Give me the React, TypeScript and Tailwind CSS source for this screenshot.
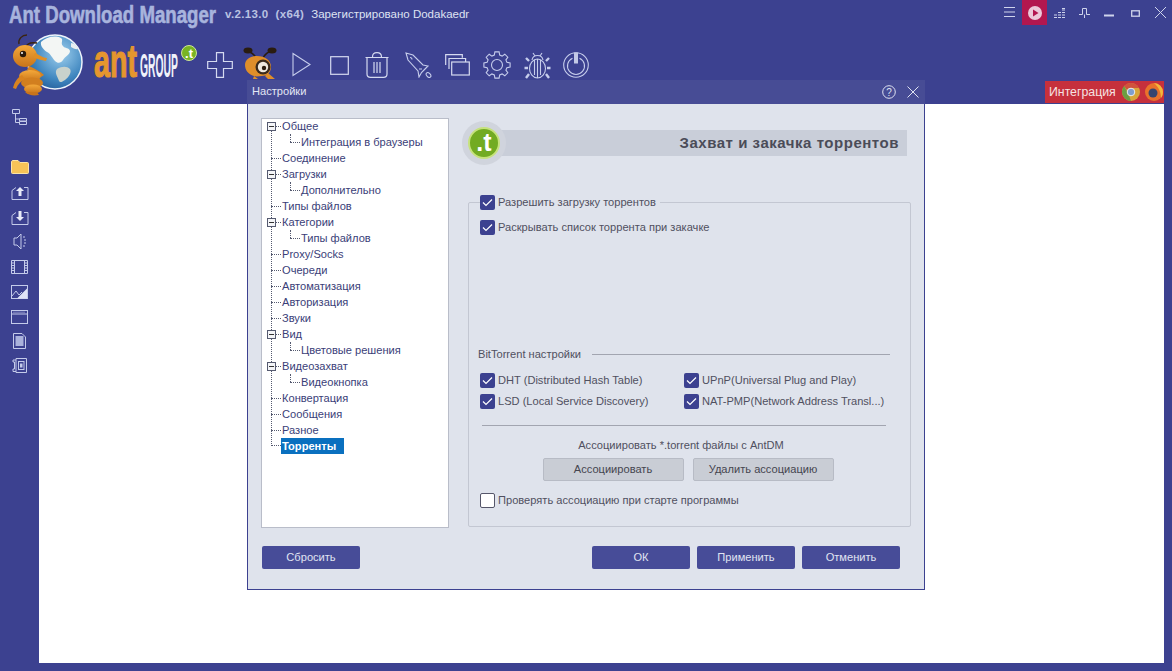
import React from "react";

const S = "#d5daf0";

function gearPath(cx: number, cy: number, ro: number, ri: number, n: number) {
  const pts: string[] = [];
  const step = (Math.PI * 2) / n;
  for (let i = 0; i < n; i++) {
    const a = i * step - Math.PI / 2;
    const d = step * 0.2;
    const seq: [number, number][] = [
      [ri, a - step * 0.34],
      [ro, a - d],
      [ro, a + d],
      [ri, a + step * 0.34],
    ];
    seq.forEach(([r, t]) => pts.push(`${(cx + r * Math.cos(t)).toFixed(1)} ${(cy + r * Math.sin(t)).toFixed(1)}`));
  }
  return "M" + pts.join("L") + "Z";
}

function Svg({ w, h, children, className = "" }: { w: number; h: number; children: React.ReactNode; className?: string }) {
  return (
    <svg width={w} height={h} viewBox={`0 0 ${w} ${h}`} fill="none" className={`block shrink-0 ${className}`}>
      {children}
    </svg>
  );
}

function LogoGlobe() {
  return (
    <svg width="84" height="68" viewBox="0 0 84 68" fill="none" className="block shrink-0">
      <defs>
        <radialGradient id="gl" cx="0.6" cy="0.35" r="0.8">
          <stop offset="0" stopColor="#9fd0ee" />
          <stop offset="0.6" stopColor="#3f86bf" />
          <stop offset="1" stopColor="#1c4f8c" />
        </radialGradient>
        <linearGradient id="an" x1="0" y1="0" x2="0" y2="1">
          <stop offset="0" stopColor="#f4a93a" />
          <stop offset="1" stopColor="#c9741a" />
        </linearGradient>
      </defs>
      <circle cx="54" cy="33" r="27" fill="url(#gl)" stroke="#eef4fb" strokeWidth="1.5" />
      <path d="M40 13c5-5 14-7 20-4 3 2-1 5 2 8 2 3 6 1 7 5 0 4-5 5-7 9-2 3-5 4-8 1-3-3-4-7-8-9-3-2-7-6-6-10z" fill="#f3f6f4" />
      <path d="M56 40c5-3 10-3 13 0 2 3-1 8-5 11-3 2-5 3-6 1-1-4-5-8-2-12z" fill="#c9d2cc" />
      <path d="M70 14c3 0 6 3 7 6-2 1-5-1-7-2z" fill="#e8eef0" />
      <path d="M18 15c-1-5 3-9 8-9M24 19c2-5 6-6 12-5" stroke="#3a2410" strokeWidth="1.4" />
      <ellipse cx="24" cy="27" rx="12" ry="11" fill="url(#an)" />
      <circle cx="22" cy="25" r="3.2" fill="#2a1a0c" />
      <circle cx="21" cy="24" r="1" fill="#fff" />
      <path d="M34 24c5 2 8 5 12 5l-1 3c-5-1-9-2-13-4z" fill="#e08f25" />
      <path d="M28 37c6 3 11 5 15 9l-3 2c-5-3-9-6-14-7z" fill="#d8831f" />
      <ellipse cx="29" cy="47" rx="11" ry="6" fill="url(#an)" />
      <ellipse cx="31" cy="54" rx="11" ry="5.5" fill="#d27f1f" />
      <ellipse cx="32" cy="60" rx="9" ry="4.5" fill="url(#an)" />
      <path d="M21 46c-5 3-8 8-9 13l3 1c2-5 5-8 9-10z" fill="#d8831f" />
      <path d="M24 63c3 3 8 4 14 3l-2-3z" fill="#c9741a" />
    </svg>
  );
}

function AntGroup() {
  return (
    <svg width="114" height="54" viewBox="0 0 114 54" className="block shrink-0">
      <text transform="translate(9 47) scale(0.61 1)" x="0" y="0" fontFamily="'Liberation Sans',sans-serif" fontWeight="700" fontSize="47" fill="#e5962e" stroke="#e5962e" strokeWidth="1.2">ant</text>
      <text transform="translate(55 47) scale(0.305 1)" x="0" y="0" fontFamily="'Liberation Sans',sans-serif" fontWeight="700" fontSize="34" fill="#f0f2fa">GROUP</text>
      <circle cx="104" cy="23" r="7.5" fill="#79b423" stroke="#cfe59a" strokeWidth="1" />
      <text x="104" y="28" textAnchor="middle" fontFamily="'Liberation Sans',sans-serif" fontWeight="700" fontSize="13" fill="#fff">.t</text>
    </svg>
  );
}

function AntSearch() {
  return (
    <Svg w={34} h={33} className="ml-[10px]">
      <path d="M13 11C11 7 8 5 4 4M20 11c2-4 4-6 9-7" stroke="#2a1c10" strokeWidth="1.6" />
      <ellipse cx="5" cy="3.500" rx="4.500" ry="3" fill="#2a1c10" />
      <ellipse cx="29" cy="3.500" rx="4.500" ry="3" fill="#2a1c10" />
      <path d="M2 18c0-6 6-9 12-9 8 0 14 4 14 11 0 6-5 9-9 9-3 0-5 1-8 0-6-2-9-6-9-11z" fill="#df8e2a" />
      <circle cx="20" cy="20" r="7.500" fill="#3a2a1c" />
      <circle cx="20" cy="20" r="5.200" fill="#efe9df" />
      <circle cx="21" cy="21" r="2.200" fill="#2a1c10" />
      <path d="M25 26l7 6h-7l-3-3zM11 29l4 3h-5z" fill="#df8e2a" />
    </Svg>
  );
}

function ToolIcons() {
  const st = { stroke: S, strokeWidth: 1.2 };
  const soft = { stroke: "#c6cdec", strokeWidth: 1.1 };
  return (
    <>
      <Svg w={26} h={26} className="ml-[8px] mt-[5px]">
        <path d="M9.500.700h7v8.800h8.800v7h-8.800v8.800h-7v-8.800H.700v-7h8.800z" {...st} />
      </Svg>
      <AntSearch />
      <Svg w={19} h={25} className="ml-[15px] mt-[5px]">
        <path d="M1 1.500l17 11L1 23.500z" {...soft} />
      </Svg>
      <Svg w={19} h={19} className="ml-[19px] mt-[9px]">
        <rect x="0.700" y="0.700" width="17.600" height="17.600" {...st} />
      </Svg>
      <Svg w={24} h={26} className="ml-[16px] mt-[5px]">
        <path d="M.500 5.500h23M7.500 5c0-3 1-4.300 4.500-4.300S16.500 2 16.500 5M2 6v16c0 2.500 1 3.300 3.500 3.300h13c2.500 0 3.500-.800 3.500-3.300V6M9 10v11M12 10v11M15 10v11" {...st} />
      </Svg>
      <Svg w={27} h={26} className="ml-[16px] mt-[5px]">
        <path d="M1 1l7 2 10 10 5 1-3.500 3.500-3 3L14 25l-1-6L3 8zM5 5.500c1 0 2 .500 2 2M17 17l-3 0" {...soft} />
        <ellipse cx="23.500" cy="23" rx="1.800" ry="2.800" transform="rotate(-45 23.500 23)" {...soft} />
      </Svg>
      <Svg w={25} h={22} className="ml-[13px] mt-[7px]">
        <path d="M.700 11V.700h16.600v3M4 15V4.500h16.600v3.500" {...st} />
        <rect x="6.700" y="8" width="17.600" height="13" {...st} />
      </Svg>
      <Svg w={28} h={28} className="ml-[13px] mt-[4px]">
        <path d={gearPath(14, 14, 13.300, 10.300, 8)} {...soft} />
        <circle cx="14" cy="14" r="5.500" {...soft} />
      </Svg>
      <Svg w={29} h={27} className="ml-[12px] mt-[5px]">
        <ellipse cx="14.500" cy="16.500" rx="8" ry="9.500" {...soft} />
        <path d="M14.500 7v19M11.500 8v15M17.500 8v15M9 8c.500-3 2-4.500 5.500-4.500S19.500 5 20 8M10 1l2 3M19 1l-2 3" {...soft} />
        <path d="M6 9L3 6M23 9l3-3M5 16H1.500M24 16h3.500M6 22l-3 4M23 22l3 4" stroke="#c6cdec" strokeWidth="2.400" />
      </Svg>
      <Svg w={26} h={26} className="ml-[11px] mt-[5px]">
        <circle cx="13" cy="13" r="12.300" {...soft} />
        <path d="M9.500 6.200a8.500 8.500 0 1 0 7 0" {...soft} />
        <rect x="11" y="0.500" width="4" height="11" fill="#c3c9e6" />
      </Svg>
    </>
  );
}

function WinControls() {
  const c = "#cfd4ec";
  return (
    <div className="flex items-start h-[26px] mr-[6px]">
      <Svg w={11} h={10} className="mt-[7px] mr-[7px]">
        <path d="M0 .500h11M0 5h11M0 9.500h11" stroke={c} />
      </Svg>
      <div className="w-[25px] h-[25px] bg-[#b2174f] flex items-center justify-center">
        <Svg w={14} h={14}>
          <circle cx="7" cy="7" r="7" fill="#ecc9d9" />
          <path d="M5 3.500l5.500 3.500L5 10.500z" fill="#b2174f" />
        </Svg>
      </div>
      <Svg w={11} h={10} className="mt-[8px] ml-[7px]">
        <path d="M0 9.500h3M4 9.500h3M8 9.500h3M0 7h3M4 7h3M8 7h3M4 4.500h3M8 4.500h3M8 2h3M8 .500h3" stroke={c} />
      </Svg>
      <Svg w={11} h={10} className="mt-[8px] ml-[14px]">
        <path d="M3.500.500h4v6h3.500M0 6.500h3.500V.500M5.500 6.500V10" stroke={c} />
      </Svg>
      <Svg w={10} h={3} className="mt-[14px] ml-[14px]">
        <path d="M0 1.500h10" stroke={c} strokeWidth="2" />
      </Svg>
      <Svg w={9} h={7} className="mt-[10px] ml-[17px]">
        <rect x="0.700" y="0.800" width="7.600" height="5.400" stroke={c} strokeWidth="1.300" />
      </Svg>
      <Svg w={11} h={11} className="mt-[7px] ml-[15px]">
        <path d="M0 0l11 11M11 0L0 11" stroke={c} />
      </Svg>
    </div>
  );
}

function SideIcons() {
  const st = { stroke: "#c4cbea", strokeWidth: 1 };
  const items = [
    <Svg w={15} h={16} key="t"><path d="M.500.500h7v4h-7zM7.500 9.500h7v2.500h-7zM7.500 12.500h7v3h-7zM3.500 4.500v9h4M3.500 10h4" {...st} /></Svg>,
    <Svg w={18} h={14} key="f"><path d="M.500 2c0-1 .500-1.500 1.500-1.500h5L9 2.500h7.500c.700 0 1 .500 1 1v9c0 .700-.300 1-1 1H1.500c-.700 0-1-.300-1-1z" fill="#f7c357" stroke="#fbe3a6" /></Svg>,
    <Svg w={18} h={14} key="u"><path d="M5 1.500L1 4.500V13.500h16V1.500h-4" {...st} /><path d="M9 1l4 4h-2.500v5h-3V5H5z" fill="#e8ebf8" /></Svg>,
    <Svg w={18} h={15} key="d"><path d="M5 2.500L1 5.500V14.500h16V2.500h-4" {...st} /><path d="M7.500 1h3v6H13l-4 4-4-4h2.500z" fill="#e8ebf8" /></Svg>,
    <Svg w={14} h={17} key="a"><path d="M1 5h3l4-4v15L4 12H1z" {...st} /><path d="M10 4h2M11 7h2M11 10h2M10 13h2" {...st} /></Svg>,
    <Svg w={17} h={14} key="v"><path d="M.500.500h16v13H.500zM3.500.500v13M13.500.500v13M.500 3h3M.500 5.500h3M.500 8h3M.500 10.500h3M13.500 3h3M13.500 5.500h3M13.500 8h3M13.500 10.500h3" {...st} /></Svg>,
    <Svg w={17} h={14} key="i"><rect x=".500" y=".500" width="16" height="13" {...st} /><path d="M16 3.500V13.500H6z" fill="#dfe3f6" /><path d="M1 11l4-5 3 4 3-3" {...st} /></Svg>,
    <Svg w={17} h={14} key="w"><rect x=".500" y=".500" width="16" height="13" {...st} /><path d="M1 4h15" {...st} /><path d="M2.500 2.200h12" stroke="#c4cbea" strokeDasharray="1 1" /></Svg>,
    <Svg w={13} h={16} key="p"><path d="M.500.500H9L12.500 4v11.500H.500z" {...st} /><rect x="2.500" y="3" width="8" height="10" fill="#aab2dc" /></Svg>,
    <Svg w={15} h={15} key="x"><path d="M4 .500h10.500v14H4zM4 2H1v2h1.500v7H1v2.500h3" {...st} /><rect x="6.500" y="3.500" width="5.500" height="8" {...st} /><rect x="8" y="5.500" width="2.500" height="4" fill="#c4cbea" /></Svg>,
  ];
  const gaps = ["mb-[35px]", "mb-[12px]", "mb-[10px]", "mb-[8px]", "mb-[10px]", "mb-[11px]", "mb-[11px]", "mb-[9px]", "mb-[9px]", ""];
  return (
    <div className="w-[39px] shrink-0 flex flex-col items-center pt-[5px]">
      {items.map((it, i) => (
        <div key={i} className={gaps[i]}>{it}</div>
      ))}
    </div>
  );
}

const tree: [string, number, boolean?][] = [
  ["Общее", 0, true],
  ["Интеграция в браузеры", 1],
  ["Соединение", 0],
  ["Загрузки", 0, true],
  ["Дополнительно", 1],
  ["Типы файлов", 0],
  ["Категории", 0, true],
  ["Типы файлов", 1],
  ["Proxy/Socks", 0],
  ["Очереди", 0],
  ["Автоматизация", 0],
  ["Авторизация", 0],
  ["Звуки", 0],
  ["Вид", 0, true],
  ["Цветовые решения", 1],
  ["Видеозахват", 0, true],
  ["Видеокнопка", 1],
  ["Конвертация", 0],
  ["Сообщения", 0],
  ["Разное", 0],
];

function Tree() {
  return (
    <div className="relative w-[188px] h-[410px] mt-[14px] bg-white border border-[#b9bdc9] shrink-0">
      <div className="absolute left-[9px] top-[12px] h-[315px] border-l border-dotted border-[#555a70]" />
      {tree.map(([t, d, exp], i) => (
        <div key={i} className="relative h-4 flex items-center pb-[2px]">
          {d === 0 ? (
            <div className="absolute left-[9px] top-[7px] w-[10px] border-t border-dotted border-[#555a70]" />
          ) : (
            <>
              <div className="absolute left-[28px] top-[-1px] h-[8px] border-l border-dotted border-[#555a70]" />
              <div className="absolute left-[28px] top-[7px] w-[10px] border-t border-dotted border-[#555a70]" />
            </>
          )}
          {exp && (
            <div className="absolute left-[5px] top-[3px] w-[9px] h-[9px] bg-[#f4f5f8] border border-[#555a70] flex items-center justify-center">
              <div className="w-[5px] h-px bg-[#333]" />
            </div>
          )}
          <span className={`${d === 0 ? "ml-[20px]" : "ml-[39px]"} text-[#3a3e78] whitespace-nowrap`}>{t}</span>
        </div>
      ))}
      <div className="relative h-4 -mt-px flex items-center">
        <div className="absolute left-[9px] top-[7px] w-[10px] border-t border-dotted border-[#555a70]" />
        <span className="ml-[19px] px-px w-[63px] h-4 leading-4 bg-[#0a70bf] text-white font-bold whitespace-nowrap">Торренты</span>
      </div>
    </div>
  );
}

function Check({ on = true, label, className = "" }: { on?: boolean; label: string; className?: string }) {
  return (
    <div className={`flex items-center h-[15px] gap-[3px] ${className}`}>
      {on ? (
        <div className="w-[15px] h-[15px] rounded-[2px] bg-[#3c4190] flex items-center justify-center shrink-0">
          <Svg w={11} h={9}>
            <path d="M1 4.500L4 7.500 10 1.500" stroke="#fff" strokeWidth="1.200" />
          </Svg>
        </div>
      ) : (
        <div className="w-[15px] h-[15px] rounded-[2px] bg-white border border-[#55566a] shrink-0" />
      )}
      <span className="text-[#50505f] whitespace-nowrap">{label}</span>
    </div>
  );
}

function BlueBtn({ children, className = "" }: { children: React.ReactNode; className?: string }) {
  return (
    <div className={`w-[98px] h-[23px] rounded-[2px] bg-[#474c98] text-[#e0e4f2] flex items-center justify-center ${className}`}>
      {children}
    </div>
  );
}

function GrayBtn({ children }: { children: React.ReactNode }) {
  return (
    <div className="w-[141px] h-[23px] rounded-[2px] bg-[#c9cdd5] border border-[#b7bbc5] text-[#45454f] flex items-center justify-center">
      {children}
    </div>
  );
}

function Right() {
  return (
    <div className="w-[443px] ml-[19px] shrink-0 flex flex-col">
      <div className="relative ml-[22px] mt-[26px] h-[26px] w-[417px] bg-[#c9ced9] flex items-center justify-end pr-[8px]">
        <span className="font-bold text-[15px] tracking-[0.53px] text-[#4b4c58] whitespace-nowrap">Захват и закачка торрентов</span>
        <div className="absolute left-[-28px] top-[-9px] w-[44px] h-[44px] rounded-full bg-[#d0d4dd] flex items-center justify-center">
          <div className="w-[32px] h-[32px] rounded-full bg-[#72ab22] border-2 border-[#c6e27c] flex items-center justify-center text-white font-bold text-[25px] leading-none pb-[2px]">.t</div>
        </div>
      </div>
      <div className="relative mt-[46px] h-[325px] border border-[#c3c7d2] rounded-[2px] flex flex-col">
        <Check label="Разрешить загрузку торрентов" className="absolute left-[11px] top-[-8px] bg-[#dfe3ec] pr-[4px]" />
        <Check label="Раскрывать список торрента при закачке" className="ml-[11px] mt-[17px]" />
        <div className="flex items-center ml-[9px] mr-[20px] mt-[112px] h-[14px] gap-[11px]">
          <span className="text-[#50505f] whitespace-nowrap">BitTorrent настройки</span>
          <div className="flex-1 h-px bg-[#a2a5b0]" />
        </div>
        <div className="grid grid-cols-[204px_1fr] gap-y-[6px] ml-[11px] mt-[12px]">
          <Check label="DHT (Distributed Hash Table)" />
          <Check label="UPnP(Universal Plug and Play)" />
          <Check label="LSD (Local Service Discovery)" />
          <Check label="NAT-PMP(Network Address Transl...)" />
        </div>
        <div className="h-px bg-[#a2a5b0] ml-[13px] mr-[24px] mt-[16px]" />
        <div className="text-center text-[#50505f] mt-[12px] h-[14px] leading-[14px] pr-[17px]">Ассоциировать *.torrent файлы с AntDM</div>
        <div className="flex justify-center gap-[9px] mt-[6px] pr-[3px]">
          <GrayBtn>Ассоциировать</GrayBtn>
          <GrayBtn>Удалить ассоциацию</GrayBtn>
        </div>
        <Check on={false} label="Проверять ассоциацию при старте программы" className="ml-[11px] mt-[12px]" />
      </div>
    </div>
  );
}

function Dialog() {
  return (
    <div className="absolute left-[247px] top-[80px] w-[678px] h-[510px] bg-[#dfe3ec] border-x border-b border-[#3c4190] flex flex-col">
      <div className="h-[24px] -mx-px bg-[#474c95] flex items-center justify-between pl-[5px] pr-[6px] text-[#e4e7f4]">
        <span className="pb-[2px]">Настройки</span>
        <div className="flex items-center gap-[11px]">
          <Svg w={14} h={14}>
            <circle cx="7" cy="7" r="6.300" stroke="#dfe3f2" />
            <text x="7" y="10.500" textAnchor="middle" fontSize="10" fontFamily="'Liberation Sans',sans-serif" fill="#dfe3f2">?</text>
          </Svg>
          <Svg w={12} h={12}>
            <path d="M.500.500l11 11M11.500.500l-11 11" stroke="#dfe3f2" />
          </Svg>
        </div>
      </div>
      <div className="flex pl-[13px]">
        <Tree />
        <Right />
      </div>
      <div className="flex ml-[14px] mt-[18px]">
        <BlueBtn>Сбросить</BlueBtn>
        <div className="flex gap-[7px] ml-[232px]">
          <BlueBtn>ОК</BlueBtn>
          <BlueBtn>Применить</BlueBtn>
          <BlueBtn>Отменить</BlueBtn>
        </div>
      </div>
    </div>
  );
}

export default function App() {
  return (
    <div className="relative w-[1172px] h-[671px] overflow-hidden bg-[#3c4190] font-['Liberation_Sans',sans-serif] text-[11.1px] flex flex-col">
      <div className="h-[30px] flex items-start justify-between shrink-0">
        <div className="flex items-center h-[30px] pl-[9px]">
          <span className="inline-block w-[206px] font-bold text-[23px] leading-none text-[#a8b4dd] whitespace-nowrap origin-left scale-x-[0.81] [-webkit-text-stroke:0.6px_#a8b4dd]">Ant Download Manager</span>
          <span className="ml-[10px] text-[#b9c1e2] text-[11.5px] font-bold tracking-[0.35px] whitespace-nowrap">v.2.13.0&nbsp; (x64)</span>
          <span className="ml-[7px] text-[#dfe3f2] text-[11.5px] whitespace-nowrap">Зарегистрировано Dodakaedr</span>
        </div>
        <WinControls />
      </div>
      <div className="h-[50px] flex items-start shrink-0 pl-[1px]">
        <div className="-mt-[1px]"><LogoGlobe /></div>
        <AntGroup />
        <div className="flex items-start mt-[17px]">
          <ToolIcons />
        </div>
      </div>
      <div className="h-[24px] flex justify-end pr-[8px] items-center shrink-0">
        <div className="w-[119px] h-[22px] bg-[#c6303c] text-[#f5e3e3] text-[12.3px] flex items-center pl-[4px]">
          <span>Интеграция</span>
          <Svg w={18} h={18} className="ml-[6px]">
            <circle cx="9" cy="9" r="9" fill="#d9a63a" />
            <path d="M9 0a9 9 0 0 1 8 5H9a4 4 0 0 0-4 2L2 3a9 9 0 0 1 7-3z" fill="#d0533d" />
            <path d="M0 9a9 9 0 0 1 2-6l4 7 3 8a9 9 0 0 1-9-9z" fill="#6c9e43" />
            <circle cx="9" cy="9" r="3.800" fill="#7f9fd0" stroke="#eee" />
          </Svg>
          <Svg w={18} h={18} className="ml-[5px]">
            <circle cx="9" cy="9" r="9" fill="#e9722b" />
            <path d="M9 0a9 9 0 0 1 9 9c0 3-1 5-2 6 0-6-2-10-7-15z" fill="#f3b63b" />
            <circle cx="8" cy="10" r="4.500" fill="#37456f" />
          </Svg>
        </div>
      </div>
      <div className="flex flex-1 min-h-0">
        <SideIcons />
        <div className="flex-1 bg-white mr-[8px] mb-[8px]" />
      </div>
      <Dialog />
    </div>
  );
}
